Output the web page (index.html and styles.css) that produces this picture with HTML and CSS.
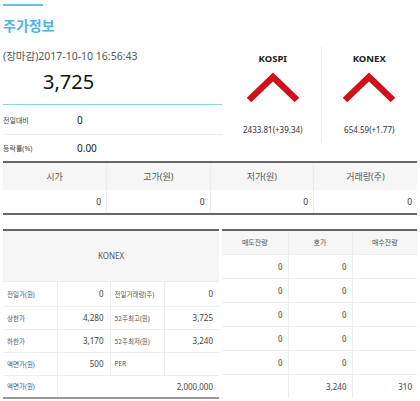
FILE: index.html
```html
<!DOCTYPE html>
<html lang="ko">
<head>
<meta charset="utf-8">
<title>주가정보</title>
<link rel="stylesheet" href="styles.css">
</head>
<body>
<div class="page">
  <div class="accent"></div>
  <h1 class="title">주가정보</h1>

  <div class="summary">
    <div class="quote">
      <div class="time">(장마감)2017-10-10 16:56:43</div>
      <div class="price">3,725</div>
      <div class="stat first"><span class="label">전일대비</span><span class="val">0</span></div>
      <div class="stat"><span class="label">등락률(%)</span><span class="val">0.00</span></div>
    </div>
    <div class="indices">
      <div class="index">
        <div class="idx-name">KOSPI</div>
        <svg class="chev" viewBox="0 0 54 34" width="54" height="34"><polyline points="3,30 27,7 51,30" /></svg>
        <div class="idx-val">2433.81(+39.34)</div>
      </div>
      <div class="index divided">
        <div class="idx-name">KONEX</div>
        <svg class="chev" viewBox="0 0 54 34" width="54" height="34"><polyline points="3,30 27,7 51,30" /></svg>
        <div class="idx-val">654.59(+1.77)</div>
      </div>
    </div>
  </div>

  <table class="ohlc">
    <thead>
      <tr><th>시가</th><th>고가(원)</th><th>저가(원)</th><th>거래량(주)</th></tr>
    </thead>
    <tbody>
      <tr><td>0</td><td>0</td><td>0</td><td>0</td></tr>
    </tbody>
  </table>

  <div class="bottom">
    <table class="info">
      <colgroup><col class="c1"><col class="c2"><col class="c3"><col class="c4"></colgroup>
      <thead>
        <tr><th colspan="4">KONEX</th></tr>
      </thead>
      <tbody>
        <tr class="r1"><td class="lbl">전일가(원)</td><td class="num">0</td><td class="lbl">전일거래량(주)</td><td class="num">0</td></tr>
        <tr><td class="lbl">상한가</td><td class="num">4,280</td><td class="lbl">52주최고(원)</td><td class="num">3,725</td></tr>
        <tr><td class="lbl">하한가</td><td class="num">3,170</td><td class="lbl">52주최저(원)</td><td class="num">3,240</td></tr>
        <tr><td class="lbl">액면가(원)</td><td class="num">500</td><td class="lbl">PER</td><td class="num"></td></tr>
        <tr><td class="lbl">액면가(원)</td><td class="num" colspan="3">2,000,000</td></tr>
      </tbody>
    </table>

    <table class="book">
      <colgroup><col class="b1"><col class="b2"><col class="b3"></colgroup>
      <thead>
        <tr><th>매도잔량</th><th>호가</th><th>매수잔량</th></tr>
      </thead>
      <tbody>
        <tr><td>0</td><td>0</td><td></td></tr>
        <tr><td>0</td><td>0</td><td></td></tr>
        <tr><td>0</td><td>0</td><td></td></tr>
        <tr><td>0</td><td>0</td><td></td></tr>
        <tr><td>0</td><td>0</td><td></td></tr>
        <tr><td></td><td>3,240</td><td>310</td></tr>
      </tbody>
    </table>
  </div>
</div>
</body>
</html>
```

FILE: styles.css
```css
* { box-sizing: border-box; }
html, body { margin: 0; padding: 0; background: #fff; }
body {
  font-family: "Noto Sans", "Noto Sans CJK KR", sans-serif;
  color: #333;
  width: 420px;
  height: 401px;
  overflow: hidden;
}
.page { padding: 0 3px; }

.accent {
  width: 40px;
  height: 2px;
  margin-top: 4px;
  background: #5cc4e8;
}
.title {
  margin: 9px 0 0;
  font-size: 14px;
  line-height: 20px;
  font-weight: 700;
  color: #4ab6e0;
  font-family: "Noto Sans CJK KR", "Noto Sans", sans-serif;
}

.summary {
  display: flex;
  gap: 3px;
}
.quote {
  width: 219px;
  padding-top: 13px;
}
.time {
  font-size: 10.5px;
  line-height: 16px;
  color: #555;
  font-family: "Noto Sans", "Noto Sans CJK KR", sans-serif;
}
.price {
  font-size: 20px;
  line-height: 26px;
  margin-top: 5px;
  padding-left: 40px;
  color: #111;
  padding-bottom: 9px;
  border-bottom: 1px solid #8ad4ea;
}
.stat {
  display: flex;
  align-items: center;
  height: 26px;
}
.stat.first {
  height: 30px;
  border-bottom: 1px solid #eee;
}
.stat .label {
  width: 74px;
  font-size: 7px;
  color: #444;
}
.stat .val {
  font-size: 10px;
  color: #222;
}

.indices {
  flex: 1;
  display: flex;
  margin-top: 12px;
  height: 96px;
}
.index {
  flex: 1;
  display: flex;
  flex-direction: column;
  align-items: center;
}
.index.divided { border-left: 1px solid #eaeaea; }
.idx-name {
  margin-top: 5px;
  font-size: 9.5px;
  line-height: 14px;
  font-weight: 700;
  color: #1a1a1a;
}
.chev {
  display: block;
  margin-top: 4px;
}
.chev polyline {
  fill: none;
  stroke: #d0101a;
  stroke-width: 6.5;
  stroke-linejoin: miter;
  stroke-linecap: butt;
}
.idx-val {
  margin-top: 20px;
  font-size: 8px;
  line-height: 12px;
  color: #333;
}

table {
  border-collapse: collapse;
  table-layout: fixed;
}
.ohlc {
  width: 414px;
  border-top: 2px solid #666;
  border-bottom: 2px solid #666;
}
.ohlc th {
  height: 28px;
  background: #f6f6f6;
  font-weight: 400;
  font-size: 9px;
  color: #555;
  border-left: 1px solid #ececec;
  padding: 0;
}
.ohlc td {
  height: 24px;
  font-size: 8.5px;
  color: #333;
  text-align: right;
  padding: 0 5px 0 0;
  border-left: 1px solid #ececec;
}
.ohlc th:first-child, .ohlc td:first-child { border-left: none; }

.bottom {
  display: flex;
  gap: 3px;
  margin-top: 14px;
  align-items: flex-start;
}
.info {
  width: 216px;
  border-top: 2px solid #666;
  border-bottom: 2px solid #999;
}
.info .c1 { width: 54px; }
.info .c2 { width: 53px; }
.info .c3 { width: 54px; }
.info .c4 { width: 55px; }
.info th {
  height: 51px;
  background: #f6f6f6;
  font-weight: 400;
  font-size: 8px;
  color: #555;
  padding: 0;
}
.info td {
  height: 23px;
  border-top: 1px solid #eee;
  border-left: 1px solid #eee;
  padding: 0;
}
.info tr.r1 td { height: 25px; }
.info td:first-child { border-left: none; }
.info td.lbl {
  font-size: 6.5px;
  color: #555;
  padding-left: 4px;
}
.info td.num {
  font-size: 8px;
  color: #444;
  text-align: right;
  padding-right: 6px;
}

.book {
  flex: 1;
  width: 195px;
  border-top: 2px solid #666;
}
.book .b1 { width: 66px; }
.book .b2 { width: 64px; }
.book .b3 { width: 65px; }
.book th {
  height: 24px;
  background: #f6f6f6;
  font-weight: 400;
  font-size: 7px;
  color: #555;
  padding: 0;
  border-left: 1px solid #eee;
}
.book td {
  height: 24px;
  font-size: 8px;
  color: #444;
  text-align: right;
  padding: 0 5px 0 0;
  border-top: 1px solid #eee;
  border-left: 1px solid #eee;
}
.book th:first-child, .book td:first-child { border-left: none; }
```
